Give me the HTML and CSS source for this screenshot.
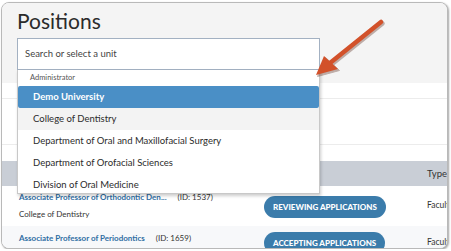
FILE: index.html
```html
<!DOCTYPE html>
<html>
<head>
  <link rel="stylesheet" href="styles.css">
</head>
<body>
  <div class="window">
    <div class="page-header">
      <div class="page-title">Positions</div>
      <div class="unit-select">
        <div class="unit-input">Search or select a unit</div>
        <div class="unit-menu">
          <div class="menu-group">Administrator</div>
          <div class="menu-item active">Demo University</div>
          <div class="menu-item hover">College of Dentistry</div>
          <div class="menu-item">Department of Oral and Maxillofacial Surgery</div>
          <div class="menu-item">Department of Orofacial Sciences</div>
          <div class="menu-item">Division of Oral Medicine</div>
        </div>
      </div>
    </div>

    <div class="filters">
      <div class="filter-row short"></div>
      <div class="filter-row tall"></div>
      <div class="filter-row short"></div>
    </div>

    <div class="table">
      <div class="table-head">
        <div class="col-title"></div>
        <div class="col-status"></div>
        <div class="col-type">Type</div>
      </div>
      <div class="table-row">
        <div class="col-title">
          <div class="position-line">
            <a class="position-link">Associate Professor of Orthodontic Den...</a>
            <span class="position-id">(ID: 1537)</span>
          </div>
          <div class="position-unit">College of Dentistry</div>
        </div>
        <div class="col-status"><span class="badge">REVIEWING APPLICATIONS</span></div>
        <div class="col-type">Faculty</div>
      </div>
      <div class="table-row alt">
        <div class="col-title">
          <div class="position-line">
            <a class="position-link">Associate Professor of Periodontics</a>
            <span class="position-id">(ID: 1659)</span>
          </div>
        </div>
        <div class="col-status"><span class="badge">ACCEPTING APPLICATIONS</span></div>
        <div class="col-type">Faculty</div>
      </div>
    </div>

    <!-- callout arrow drawn over the screenshot -->
    <svg class="callout" width="451" height="251" viewBox="0 0 451 251">
      <g transform="translate(1.5,1.5)" fill="#5a2a1a" stroke="#5a2a1a" opacity="0.35">
        <line x1="381" y1="22" x2="330" y2="63" stroke-width="4.5" stroke-linecap="round"/>
        <polygon points="316,75 324,56 338,69"/>
      </g>
      <line x1="381" y1="22" x2="330" y2="63" stroke="#d2512a" stroke-width="4.5" stroke-linecap="round"/>
      <polygon points="316,75 324,56 338,69" fill="#d2512a"/>
    </svg>
  </div>
</body>
</html>
```

FILE: styles.css
```css
body {
  margin: 0;
  background-color: #ffffff;
  font-family: Lato, 'Open Sans', sans-serif;
  color: #333333;
}

.window {
  position: relative;
  margin: 2px 3px 0 1px;
  height: 245px;
  border: 1px solid #b9b9b9;
  border-radius: 8px;
  box-shadow: 1px 1px 2px rgba(0, 0, 0, 0.35);
  overflow: hidden;
  background-color: #ffffff;
}

.page-header {
  background-color: #f4f4f4;
  padding: 5px 15px 13px;
}

.page-title {
  font-size: 21px;
  line-height: 26px;
  color: #2b2b2b;
  margin-bottom: 4px;
}

.unit-select {
  position: relative;
  width: 303px;
}

.unit-input {
  height: 32px;
  box-sizing: border-box;
  border: 1px solid #a3b1c2;
  background-color: #ffffff;
  font-size: 9.5px;
  line-height: 30px;
  padding-left: 7px;
  color: #444444;
}

.unit-menu {
  position: absolute;
  top: 32px;
  left: 0;
  width: 303px;
  height: 124px;
  box-sizing: border-box;
  overflow: hidden;
  background-color: #ffffff;
  border: 1px solid #c8c8c8;
  border-top: none;
  box-shadow: 1px 2px 3px rgba(0, 0, 0, 0.2);
  z-index: 2;
}

.menu-group {
  font-size: 7.5px;
  line-height: 16px;
  padding-left: 12px;
  color: #555555;
}

.menu-item {
  height: 22px;
  line-height: 22px;
  font-size: 9.5px;
  padding-left: 15px;
  color: #2b2b2b;
  white-space: nowrap;
}

.menu-item.active {
  background-color: #4a8fc6;
  color: #ffffff;
  font-weight: 700;
  border-radius: 2px;
}

.menu-item.hover {
  background-color: #f3f3f3;
}

.filters {
  background-color: #ffffff;
}

.filter-row {
  border-bottom: 1px solid #ececec;
}

.filter-row.short {
  height: 15px;
}

.filter-row.tall {
  height: 45px;
}

.filter-row:last-child {
  border-bottom: none;
  height: 16px;
}

.table-head {
  display: flex;
  height: 25px;
  align-items: center;
  background-color: #c9ced6;
  color: #333333;
}

.table-row {
  display: flex;
  height: 40px;
  align-items: center;
  background-color: #ffffff;
}

.table-row.alt {
  background-color: #f7f8fa;
  align-items: flex-start;
  padding-top: 4px;
}

.col-title {
  flex-shrink: 0;
  width: 246px;
  padding-left: 17px;
  box-sizing: border-box;
}

.col-status {
  flex-shrink: 0;
  width: 179px;
  padding-left: 16px;
  box-sizing: border-box;
}

.col-type {
  flex-shrink: 0;
  font-size: 8.5px;
  white-space: nowrap;
}

.table-row .col-type {
  margin-top: -3px;
}

.table-row.alt .col-type {
  margin-top: 7px;
}

.table-head .col-type {
  font-size: 9.5px;
}

.position-line {
  display: flex;
  font-size: 8px;
  line-height: 16px;
}

.position-link {
  color: #2f6ea3;
  font-weight: 700;
  white-space: nowrap;
}

.position-link + .position-id {
  margin-left: 11px;
}

.position-id {
  color: #333333;
}

.position-unit {
  font-size: 8px;
  line-height: 18px;
  color: #333333;
}

.badge {
  display: inline-block;
  background-color: #3b7cab;
  color: #ffffff;
  font-size: 8px;
  font-weight: 900;
  line-height: 22px;
  padding: 0 9px;
  border-radius: 11px;
  white-space: nowrap;
}

.callout {
  position: absolute;
  left: -2px;
  top: -3px;
  pointer-events: none;
  z-index: 3;
}
```
